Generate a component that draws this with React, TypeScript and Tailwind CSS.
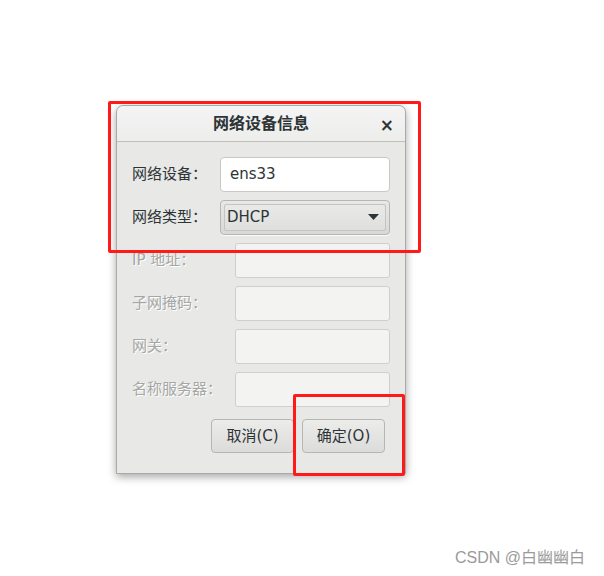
import React from "react";

const font = { fontFamily: '"DejaVu Sans", "Noto Sans CJK SC", sans-serif' };

function Row({
  label,
  disabled,
  children,
}: {
  label: string;
  disabled?: boolean;
  children: React.ReactNode;
}) {
  return (
    <div className="flex items-center justify-between h-[34px]">
      <span
        className={`text-[15px] ${
          disabled ? "text-[#a5a7a5] [text-shadow:1px_1px_0_#ffffff]" : "text-[#2e3436]"
        }`}
      >
        {label}
      </span>
      {children}
    </div>
  );
}

function DisabledInput() {
  return (
    <div className="w-[155px] h-[35px] rounded-[3px] border border-[#cfcfcd] bg-[#f3f3f2]" />
  );
}

export default function App() {
  return (
    <div className="relative w-[604px] h-[576px] bg-white overflow-hidden" style={font}>
      {/* dialog */}
      <div className="ml-[116px] mt-[105px] w-[290px] h-[369px] rounded-t-[7px] border border-[#a9a9a7] bg-[#e8e8e7] shadow-[0_3px_8px_rgba(0,0,0,0.35)] flex flex-col">
        <div className="relative h-[36px] flex items-center justify-center rounded-t-[7px] border-b border-[#bfbfbd] bg-gradient-to-b from-[#f4f4f4] to-[#ededec]">
          <span className="text-[16px] font-bold text-[#2e3436]">网络设备信息</span>
          <span className="absolute right-[11px] top-[7px] text-[17px] font-bold text-[#2e3436]">×</span>
        </div>
        <div className="flex flex-col gap-[9px] pl-[15px] pr-[15px] pt-[15px]">
          <Row label="网络设备：">
            <div className="w-[170px] h-[35px] rounded-[4px] border border-[#cdc7c2] bg-white flex items-center pl-[9px] text-[15px] text-[#2e3436]">
              ens33
            </div>
          </Row>
          <Row label="网络类型：">
            <div className="w-[170px] h-[35px] rounded-[4px] border border-[#b6b6b3] bg-gradient-to-b from-[#e8e8e7] to-[#d9d9d8] p-[3px] shadow-[0_1px_0_rgba(255,255,255,0.8)]">
              <div className="h-full rounded-[2px] border border-[#c4c4c2] bg-gradient-to-b from-[#e9e9e8] to-[#dfdfde] flex items-center justify-between pl-[2px] pr-[6px]">
                <span className="text-[15px] text-[#2e3436]">DHCP</span>
                <svg width="11" height="6" viewBox="0 0 11 6">
                  <path d="M0 0 H11 L5.5 6 Z" fill="#2e3436" />
                </svg>
              </div>
            </div>
          </Row>
          <Row label="IP 地址：" disabled>
            <DisabledInput />
          </Row>
          <Row label="子网掩码：" disabled>
            <DisabledInput />
          </Row>
          <Row label="网关：" disabled>
            <DisabledInput />
          </Row>
          <Row label="名称服务器：" disabled>
            <DisabledInput />
          </Row>
        </div>
        <div className="flex justify-end gap-[8px] pr-[20px] mt-[13px]">
          <button className="w-[83px] h-[34px] rounded-[4px] border border-[#b6b6b3] bg-gradient-to-b from-[#ececeb] to-[#dcdcdb] text-[15px] text-[#2e3436]">
            取消(C)
          </button>
          <button className="w-[83px] h-[34px] rounded-[4px] border border-[#b6b6b3] bg-gradient-to-b from-[#ececeb] to-[#dcdcdb] text-[15px] text-[#2e3436]">
            确定(O)
          </button>
        </div>
      </div>

      {/* annotation rectangles */}
      <div className="absolute left-[108px] top-[101px] w-[313px] h-[152px] border-[3px] border-[#ff1a1a] rounded-[2px]" />
      <div className="absolute left-[293px] top-[394px] w-[112px] h-[82px] border-[3px] border-[#ff1a1a] rounded-[2px]" />

      <span
        className="absolute left-[455px] top-[546px] text-[16px] text-[#9a9a9a]"
        style={{ fontFamily: '"Liberation Sans", "Noto Sans CJK SC", sans-serif' }}
      >
        CSDN @白幽幽白
      </span>
    </div>
  );
}
